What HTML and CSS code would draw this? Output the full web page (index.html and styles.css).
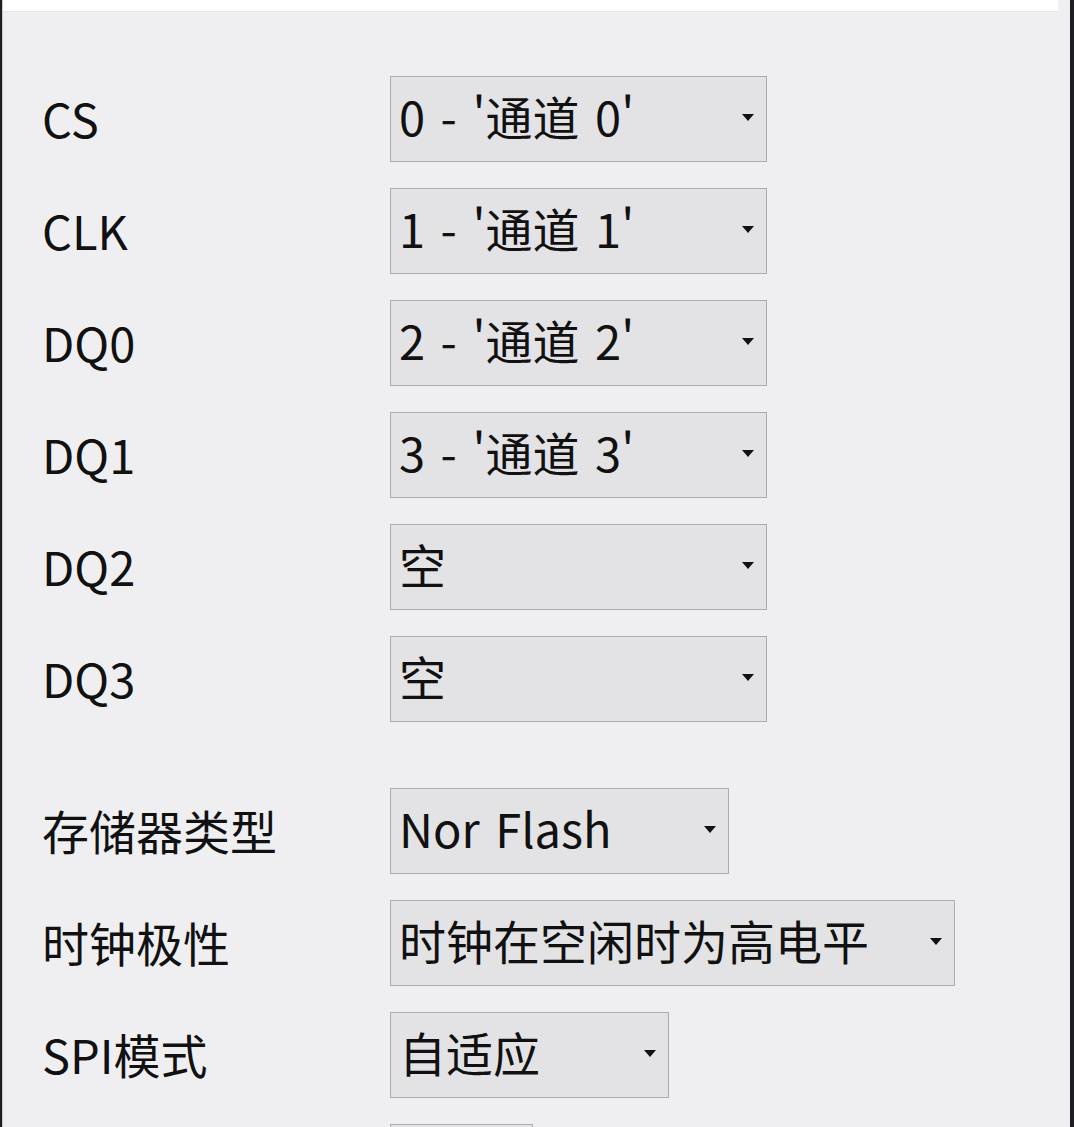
FILE: index.html
```html
<!DOCTYPE html>
<html lang="zh-CN">
<head>
<meta charset="utf-8">
<title>SPI 设置</title>
<link rel="stylesheet" href="styles.css">
</head>
<body>
<div class="window">
  <div class="topbar"></div>
  <div class="panel">
    <div class="group">
      <div class="row"><span class="label">CS</span><div class="combo w377"><span class="value">0 - '通道 0'</span><span class="arrow"></span></div></div>
      <div class="row"><span class="label">CLK</span><div class="combo w377"><span class="value">1 - '通道 1'</span><span class="arrow"></span></div></div>
      <div class="row"><span class="label">DQ0</span><div class="combo w377"><span class="value">2 - '通道 2'</span><span class="arrow"></span></div></div>
      <div class="row"><span class="label">DQ1</span><div class="combo w377"><span class="value">3 - '通道 3'</span><span class="arrow"></span></div></div>
      <div class="row"><span class="label">DQ2</span><div class="combo w377"><span class="value">空</span><span class="arrow"></span></div></div>
      <div class="row"><span class="label">DQ3</span><div class="combo w377"><span class="value">空</span><span class="arrow"></span></div></div>
    </div>
    <div class="group second">
      <div class="row"><span class="label">存储器类型</span><div class="combo w339"><span class="value">Nor Flash</span><span class="arrow"></span></div></div>
      <div class="row"><span class="label">时钟极性</span><div class="combo w565"><span class="value">时钟在空闲时为高电平</span><span class="arrow"></span></div></div>
      <div class="row"><span class="label">SPI模式</span><div class="combo w279"><span class="value">自适应</span><span class="arrow"></span></div></div>
      <div class="row"><span class="label"></span><div class="combo w143"><span class="value"></span><span class="arrow"></span></div></div>
    </div>
  </div>
</div>
</body>
</html>
```
FILE: styles.css
```css
html, body {
  margin: 0;
  padding: 0;
  height: 100%;
  overflow: hidden;
  background: #1e1e22;
}

.window {
  height: 1127px;
  width: 1068px;
  margin-left: 2px;
  display: flex;
  flex-direction: column;
  overflow: hidden;
  background: #efeff2;
  border-left: 1px solid #c9c9cc;
  box-sizing: border-box;
  font-family: "Noto Sans CJK SC", "Microsoft YaHei", sans-serif;
  color: #111;
}

.topbar {
  height: 11px;
  flex: none;
  background: #ffffff;
  border-bottom: 1px solid #e4e4e8;
  margin-right: 12px;
}

.panel {
  flex: none;
  padding: 64px 0 0 39px;
  display: flex;
  flex-direction: column;
  gap: 66px;
}

.group {
  display: flex;
  flex-direction: column;
  gap: 26px;
}

.row {
  display: flex;
  align-items: center;
  height: 86px;
}

.label {
  width: 348px;
  flex: none;
  font-size: 47px;
  line-height: 1;
  padding-bottom: 4px;
  word-spacing: 2px;
}

.combo {
  height: 86px;
  box-sizing: border-box;
  border: 1px solid #acacac;
  background: #e3e3e5;
  display: flex;
  align-items: center;
  padding: 0 12px 8px 8px;
  flex: none;
}

.value {
  flex: 1;
  font-size: 47px;
  line-height: 1;
  white-space: nowrap;
  word-spacing: 5px;
}

.arrow {
  width: 0;
  height: 0;
  border-left: 6px solid transparent;
  border-right: 6px solid transparent;
  border-top: 7px solid #111;
  margin-top: 4px;
}

.w377 { width: 377px; }
.w339 { width: 339px; }
.w565 { width: 565px; }
.w279 { width: 279px; }
.w143 { width: 143px; }
```
